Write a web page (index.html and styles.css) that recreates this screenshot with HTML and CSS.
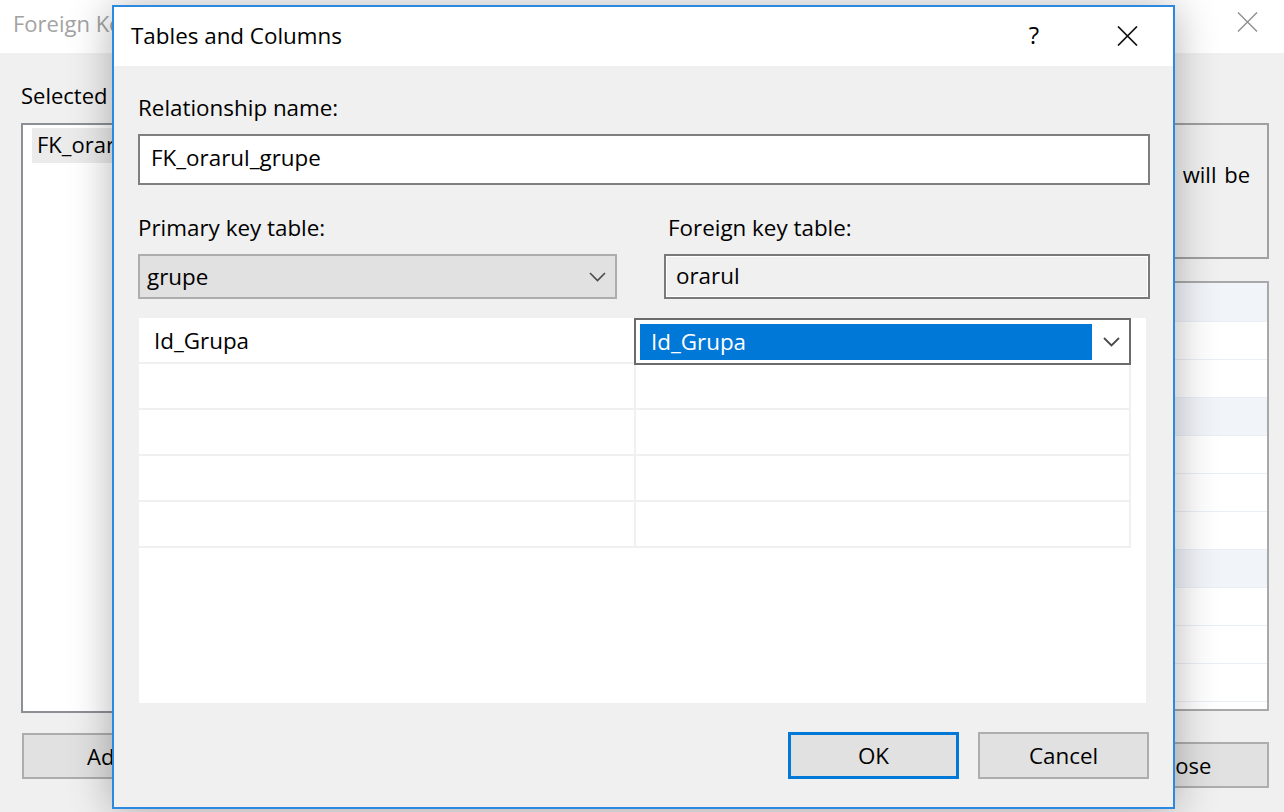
FILE: index.html
```html
<!DOCTYPE html>
<html lang="en">
<head>
<meta charset="utf-8">
<title>Tables and Columns</title>
<link rel="stylesheet" href="styles.css">
</head>
<body>
<div class="bgwin">
  <div class="bg-titlebar">
    <span class="bg-title">Foreign Key Relationships</span>
    <svg class="bg-close" width="21" height="20" viewBox="0 0 21 20"><path d="M1 0.5 L20 19.5 M20 0.5 L1 19.5" stroke="#8e8e8e" stroke-width="1.4" fill="none"/></svg>
  </div>
  <div class="bg-body">
    <div class="bg-label">Selected Relationship:</div>
    <div class="bg-list">
      <div class="bg-item">FK_orarul_grupe*</div>
    </div>
    <div class="bg-right">
      <div class="bg-info">
        <span class="info-line">Editing properties for new relationship. The 'Tables And Columns</span>
        <span class="info-line info-end">Specification' property needs to be filled in before the new relationship will be</span>
        <span class="info-line">accepted.</span>
      </div>
      <div class="bg-props">
        <div class="prow cat"></div>
        <div class="prow"></div>
        <div class="prow"></div>
        <div class="prow cat"></div>
        <div class="prow"></div>
        <div class="prow"></div>
        <div class="prow"></div>
        <div class="prow cat"></div>
        <div class="prow"></div>
        <div class="prow"></div>
        <div class="prow"></div>
      </div>
    </div>
    <div class="bg-btns-left">
      <button class="btn">Add</button>
      <button class="btn">Delete</button>
    </div>
    <div class="bg-btns-right">
      <button class="btn">Close</button>
    </div>
  </div>
</div>

<div class="dialog">
  <div class="dlg-titlebar">
    <span class="dlg-title">Tables and Columns</span>
    <div class="dlg-controls">
      <span class="dlg-help">?</span>
      <svg class="dlg-close" width="21" height="20" viewBox="0 0 21 20"><path d="M1 0.5 L20 19.5 M20 0.5 L1 19.5" stroke="#111" stroke-width="1.7" fill="none"/></svg>
    </div>
  </div>
  <div class="dlg-body">
    <div class="field-label">Relationship name:</div>
    <div class="textbox">FK_orarul_grupe</div>
    <div class="two-col">
      <div class="col">
        <div class="field-label">Primary key table:</div>
        <div class="combo">
          <span>grupe</span>
          <svg class="chev" width="17" height="10" viewBox="0 0 17 10"><polyline points="1,1 8.5,8.5 16,1" fill="none" stroke="#4a4a4a" stroke-width="1.6"/></svg>
        </div>
      </div>
      <div class="col">
        <div class="field-label indent">Foreign key table:</div>
        <div class="readonly">orarul</div>
      </div>
    </div>
    <div class="grid">
      <div class="grow">
        <div class="cell c1">Id_Grupa</div>
        <div class="cell c2 editing">
          <div class="sel">Id_Grupa</div>
          <div class="chev-wrap">
            <svg class="chev" width="17" height="10" viewBox="0 0 17 10"><polyline points="1,1 8.5,8.5 16,1" fill="none" stroke="#4a4a4a" stroke-width="1.8"/></svg>
          </div>
        </div>
      </div>
      <div class="grow"><div class="cell c1"></div><div class="cell c2"></div></div>
      <div class="grow"><div class="cell c1"></div><div class="cell c2"></div></div>
      <div class="grow"><div class="cell c1"></div><div class="cell c2"></div></div>
      <div class="grow"><div class="cell c1"></div><div class="cell c2"></div></div>
    </div>
    <div class="dlg-buttons">
      <button class="btn btn-default">OK</button>
      <button class="btn">Cancel</button>
    </div>
  </div>
</div>
</body>
</html>
```

FILE: styles.css
```css
* { box-sizing: border-box; }
html, body { margin: 0; padding: 0; }
body {
  width: 1284px;
  height: 812px;
  overflow: hidden;
  position: relative;
  background: #f0f0f0;
  font-family: "Open Sans", "Noto Sans", sans-serif;
  font-size: 22px;
  color: #000;
}
button { font-family: inherit; font-size: inherit; color: inherit; }

/* background window */
.bgwin { height: 812px; display: flex; flex-direction: column; }
.bg-titlebar {
  height: 53px;
  flex: 0 0 53px;
  background: #fff;
  display: flex;
  align-items: center;
  justify-content: space-between;
  padding: 0 26px 0 13px;
  color: #a3a3a3;
}
.bg-title { line-height: 30px; margin-top: -7px; }
.bg-close { margin-top: -9px; }
.bg-body {
  flex: 1;
  display: grid;
  grid-template-columns: 300px minmax(0, 1fr);
  grid-template-rows: auto 590px auto;
  align-content: start;
  column-gap: 20px;
  padding: 27px 15px 0 21px;
}
.bg-label { grid-column: 1; grid-row: 1; line-height: 30px; margin-bottom: 13px; white-space: nowrap; }
.bg-list {
  grid-column: 1; grid-row: 2;
  background: #fff;
  border: 2px solid #8c8f94;
  padding: 3px 9px;
}
.bg-item { height: 35px; line-height: 33px; background: #ebebeb; padding-left: 5px; white-space: nowrap; }
.bg-right { grid-column: 2; grid-row: 2; min-width: 0; display: flex; flex-direction: column; gap: 22px; }
.bg-info {
  height: 136px;
  border: 2px solid #a0a0a0;
  padding: 10px 17px;
  line-height: 26px;
  display: flex;
  flex-direction: column;
  white-space: nowrap;
  overflow: hidden;
  word-spacing: 2px;
}
.info-line { display: block; }
.info-end { text-align: right; }
.bg-props {
  height: 430px;
  border: 2px solid #a8a8a8;
  background: #fff;
  overflow: hidden;
}
.prow { height: 38px; border-bottom: 1px solid #eaeef6; }
.prow.cat { background: #f1f4f9; }
.prow:first-child { height: 39px; }
.bg-btns-left { grid-column: 1; grid-row: 3; display: flex; gap: 16px; margin-top: 20px; padding-left: 1px; }
.bg-btns-left .btn { flex-shrink: 0; }
.bg-btns-right { grid-column: 2; grid-row: 3; display: flex; justify-content: flex-end; margin-top: 29px; }

.btn {
  width: 171px;
  height: 47px;
  background: #e1e1e1;
  border: 2px solid #adadad;
  padding: 0;
  line-height: 40px;
}
.bg-btns-left .btn, .bg-btns-right .btn { height: 46px; }
.btn-default { border: 3px solid #0078d7; }

/* dialog */
.dialog {
  position: absolute;
  left: 112px;
  top: 5px;
  width: 1063px;
  height: 804px;
  border: 2px solid #2b8ae0;
  background: #f0f0f0;
  box-shadow: 0 2px 40px rgba(0, 0, 0, 0.3);
  display: flex;
  flex-direction: column;
  z-index: 2;
}
.dlg-titlebar {
  height: 59px;
  flex: 0 0 59px;
  background: #fff;
  display: flex;
  align-items: center;
  justify-content: space-between;
  padding: 0 35px 0 17px;
}
.dlg-title { line-height: 30px; font-size: 22.4px; margin-top: -2px; }
.dlg-controls { display: flex; align-items: center; gap: 78px; }
.dlg-help { font-size: 24px; line-height: 30px; margin-top: -4px; }
.dlg-close { margin-top: -2px; }

.dlg-body {
  flex: 1;
  display: flex;
  flex-direction: column;
  padding: 27px 23px 28px 24px;
  font-size: 22.4px;
}
.field-label { line-height: 30px; height: 30px; margin-bottom: 11px; white-space: nowrap; }
.field-label.indent { padding-left: 4px; }
.textbox {
  height: 51px;
  background: #fff;
  border: 2px solid #7f7f7f;
  padding-left: 11px;
  display: flex;
  align-items: center;
  padding-bottom: 5px;
}
.two-col {
  display: grid;
  grid-template-columns: 479px 1fr;
  column-gap: 47px;
  margin-top: 28px;
}
.combo {
  height: 45px;
  background: #e1e1e1;
  border: 2px solid #adadad;
  display: flex;
  align-items: center;
  justify-content: space-between;
  padding: 0 9px 0 7px;
}
.readonly {
  height: 45px;
  background: #f0f0f0;
  border: 2px solid #7a7a7a;
  box-shadow: inset 0 0 0 1px #fff;
  display: flex;
  align-items: center;
  padding-left: 10px;
  padding-bottom: 3px;
}
.grid {
  flex: 1;
  margin: 19px 4px 0 1px;
  background: #fff;
}
.grow { display: grid; grid-template-columns: 495px 497px; height: 46px; }
.cell { height: 46px; border-bottom: 2px solid #f0f0f0; display: flex; align-items: center; }
.c1 { padding-left: 15px; }
.c2 { border-left: 2px solid #f0f0f0; border-right: 2px solid #f0f0f0; }
.cell.editing {
  height: 47px;
  border: 2px solid #6b6b6b;
  padding: 4px 0 3px 4px;
  align-items: stretch;
  position: relative;
  z-index: 1;
}
.sel {
  flex: 0 0 452px;
  background: #0078d7;
  color: #fff;
  padding-left: 11px;
  padding-bottom: 2px;
  display: flex;
  align-items: center;
}
.chev-wrap { flex: 1; display: flex; align-items: center; justify-content: center; padding-left: 2px; }

.dlg-buttons {
  display: flex;
  justify-content: flex-end;
  gap: 19px;
  margin-top: 29px;
  margin-right: 1px;
}
```
